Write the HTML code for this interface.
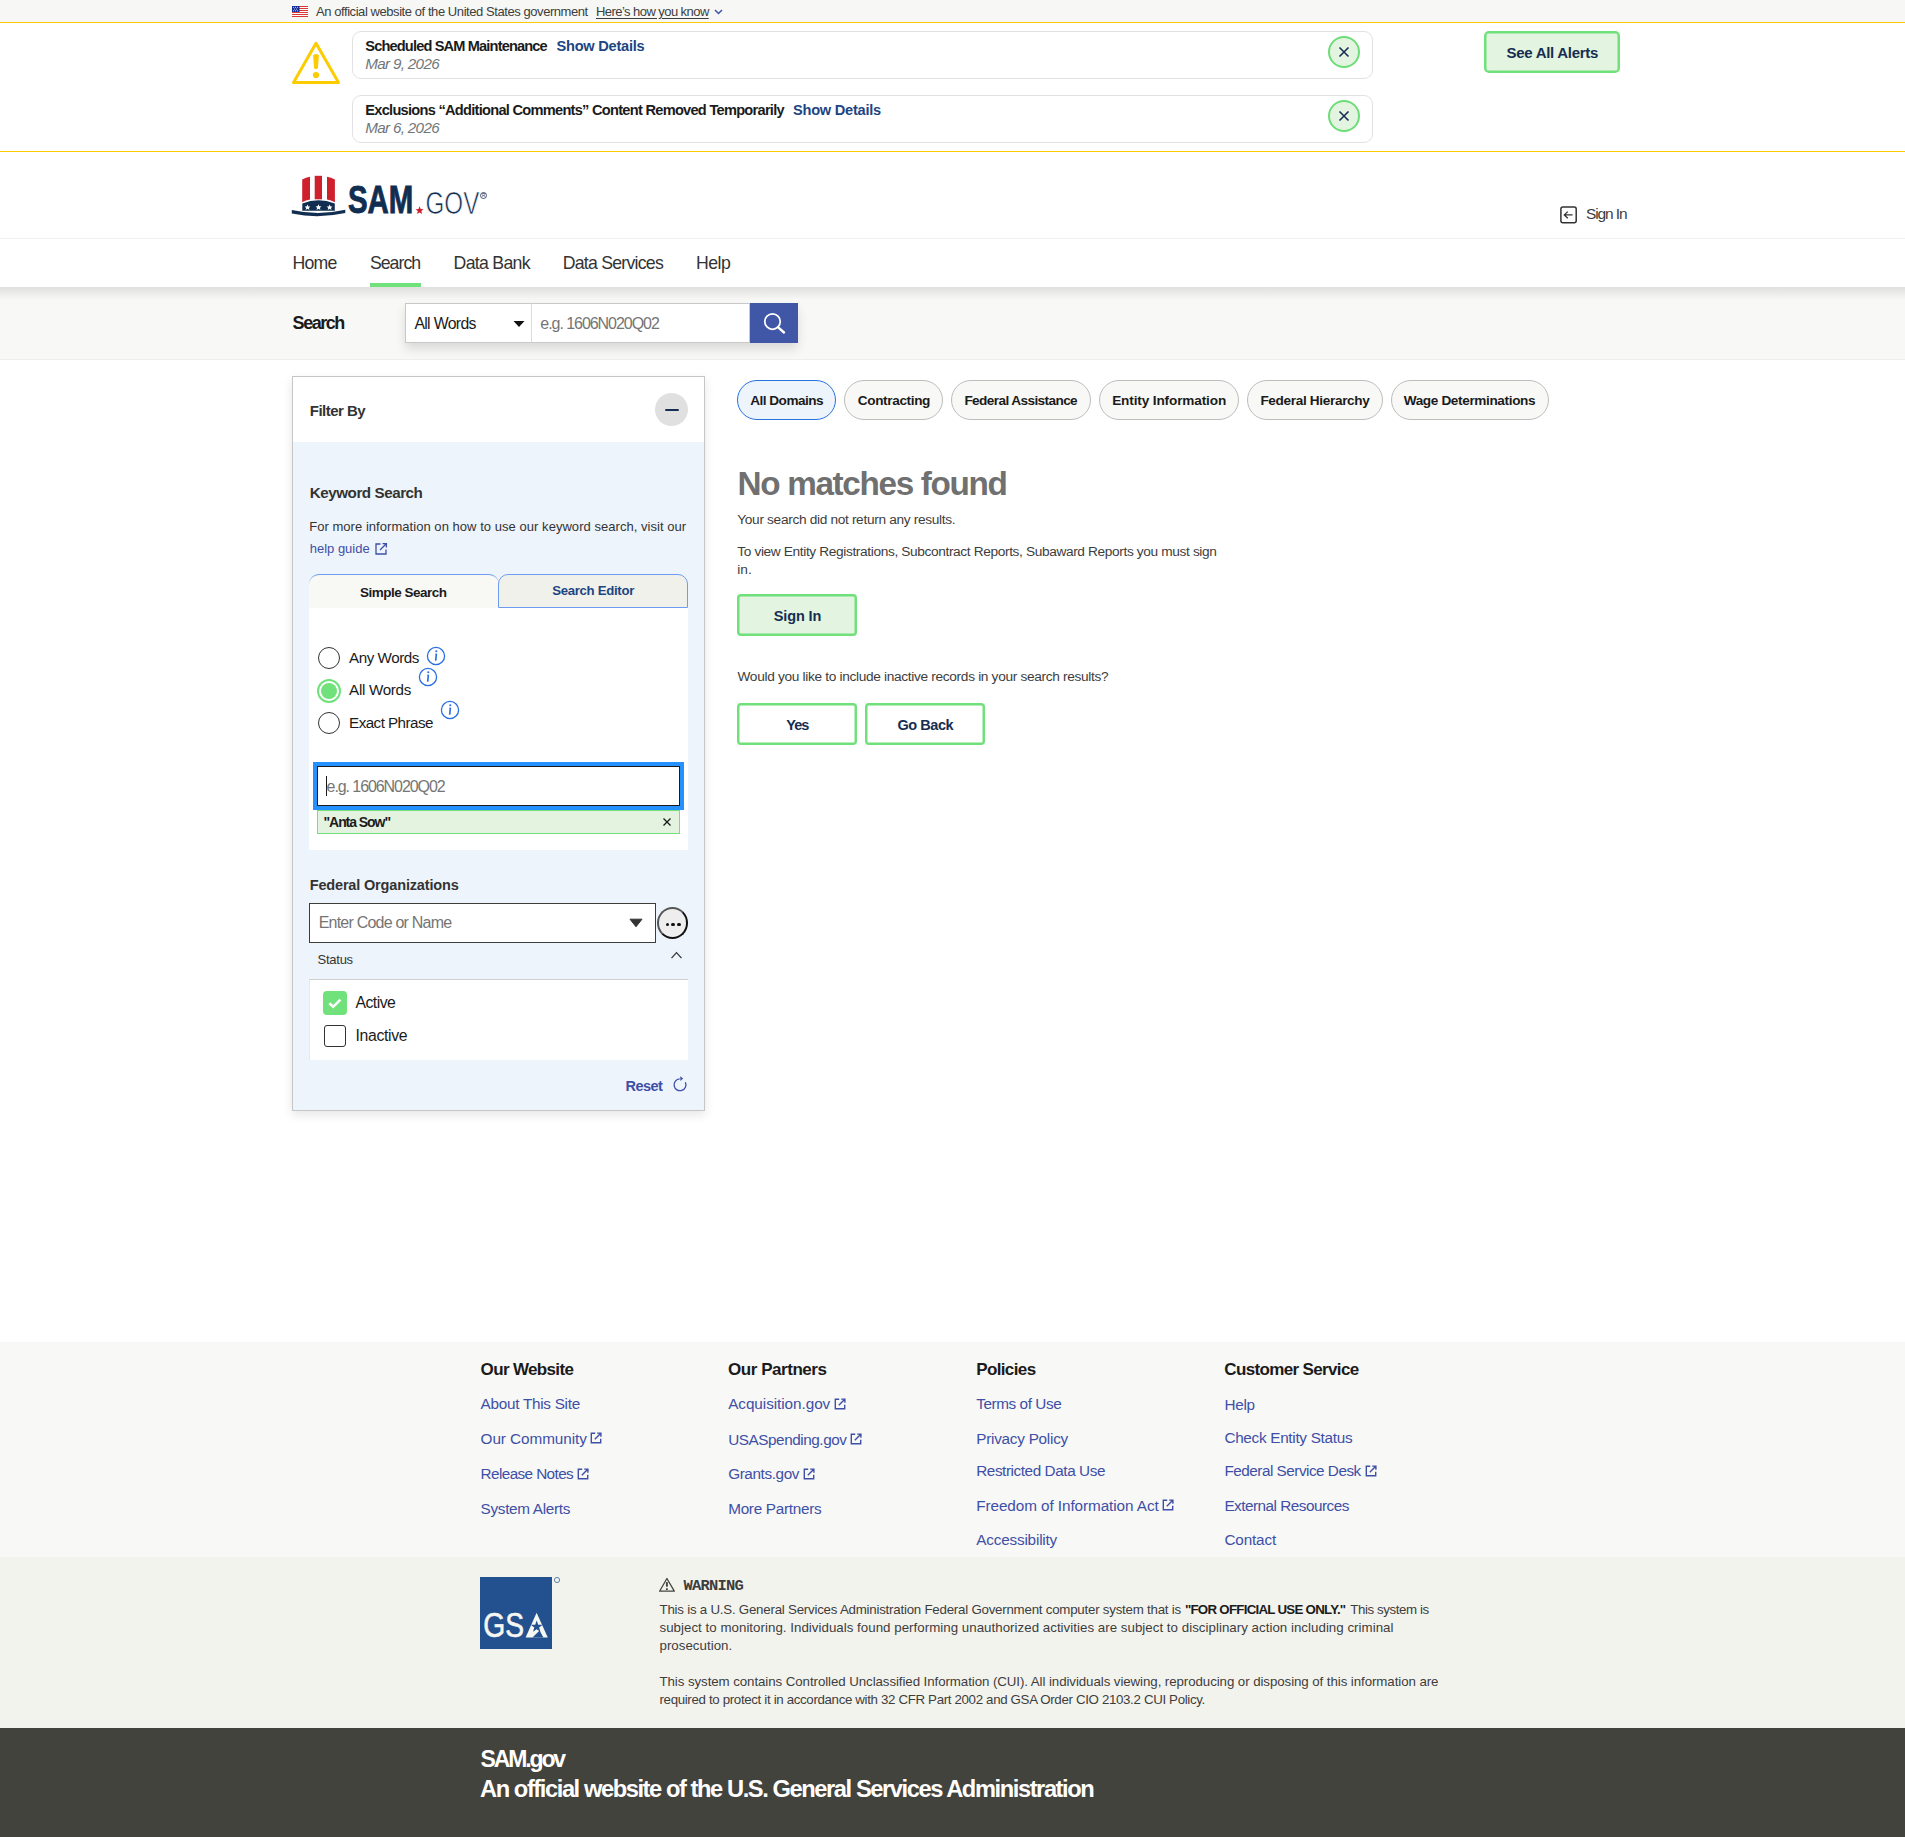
<!DOCTYPE html>
<html><head><meta charset="utf-8"><title>SAM.gov | Search</title>
<style>
html,body{margin:0;padding:0;}
body{width:1905px;height:1837px;position:relative;overflow:hidden;background:#fff;font-family:"Liberation Sans", sans-serif;color:#1b1b1b;}
.a{position:absolute;white-space:nowrap;line-height:1;}
.box{position:absolute;box-sizing:border-box;}
.pill{position:absolute;box-sizing:border-box;height:40px;top:380px;border-radius:20px;border:1px solid #bdbdbd;background:#f8f8f6;}
.gbtn{position:absolute;box-sizing:border-box;border:2px solid #6fe07a;border-radius:4px;box-shadow:inset 0 0 0 0.5px #6fe07a;}
.ext{position:absolute;}

</style></head>
<body>
<div class="box" style="left:0;top:0;width:1905px;height:22px;background:#f7f7f5;"></div>
<div class="box" style="left:0;top:22px;width:1905px;height:1px;background:#facc00;"></div>
<svg class="ext" style="left:292px;top:6px" width="16" height="11" viewBox="0 0 16 11">
<rect width="16" height="11" fill="#fff"/>
<g fill="#d83933"><rect y="0" width="16" height="1"/><rect y="2" width="16" height="1"/><rect y="4" width="16" height="1"/><rect y="6" width="16" height="1"/><rect y="8" width="16" height="1"/><rect y="10" width="16" height="1"/></g>
<rect width="7.5" height="6" fill="#162e9a"/>
<g fill="#fff"><circle cx="1.5" cy="1.2" r=".5"/><circle cx="3.5" cy="1.2" r=".5"/><circle cx="5.5" cy="1.2" r=".5"/><circle cx="2.5" cy="3" r=".5"/><circle cx="4.5" cy="3" r=".5"/><circle cx="1.5" cy="4.8" r=".5"/><circle cx="3.5" cy="4.8" r=".5"/><circle cx="5.5" cy="4.8" r=".5"/></g>
</svg>
<div class="a" style="left:316.0px;top:4.95px;font-size:13px;color:#3d3d3d;"><span style="letter-spacing:-0.433px">An official website of the United States government</span></div>
<div class="a" style="left:596.0px;top:4.95px;font-size:13px;color:#3d3d3d;text-decoration:underline;text-underline-offset:1.5px;"><span style="letter-spacing:-0.558px">Here’s how you know</span></div>
<svg class="ext" style="left:714px;top:9px" width="9" height="6" viewBox="0 0 9 6"><path d="M1 1 L4.5 4.5 L8 1" fill="none" stroke="#3d55a8" stroke-width="1.5"/></svg>
<div class="box" style="left:0;top:151px;width:1905px;height:1px;background:#facc00;"></div>
<svg class="ext" style="left:290px;top:40px" width="52" height="46" viewBox="0 0 52 46">
<path d="M26 3.2 L48.5 42.4 L3.5 42.4 Z" fill="none" stroke="#fbcc00" stroke-width="3" stroke-linejoin="round"/>
<path d="M23.1 15.2 Q26 12.8 28.9 15.2 L27.9 28.2 Q26 30 24.1 28.2 Z" fill="#fbcc00"/>
<circle cx="26" cy="35" r="3.1" fill="#fbcc00"/>
</svg>
<div class="box" style="left:352px;top:31px;width:1021px;height:48px;border:1px solid #e2e2e2;border-radius:9px;background:#fff;"></div>
<div class="box" style="left:1328px;top:36px;width:32px;height:32px;border:2.4px solid #6ddd77;border-radius:50%;background:#e3f4e0;"></div>
<svg class="ext" style="left:1337px;top:45px" width="14" height="14" viewBox="0 0 14 14"><path d="M2.5 2.5 L11.5 11.5 M11.5 2.5 L2.5 11.5" stroke="#162e51" stroke-width="1.6"/></svg>
<div class="box" style="left:352px;top:95px;width:1021px;height:48px;border:1px solid #e2e2e2;border-radius:9px;background:#fff;"></div>
<div class="box" style="left:1328px;top:100px;width:32px;height:32px;border:2.4px solid #6ddd77;border-radius:50%;background:#e3f4e0;"></div>
<svg class="ext" style="left:1337px;top:109px" width="14" height="14" viewBox="0 0 14 14"><path d="M2.5 2.5 L11.5 11.5 M11.5 2.5 L2.5 11.5" stroke="#162e51" stroke-width="1.6"/></svg>
<div class="a" style="left:365.3px;top:39.09px;font-size:14.6px;color:#1b1b1b;font-weight:700;"><span style="letter-spacing:-0.846px">Scheduled SAM Maintenance</span></div>
<div class="a" style="left:556.5px;top:39.09px;font-size:14.6px;color:#1d4582;font-weight:700;"><span style="letter-spacing:-0.246px">Show Details</span></div>
<div class="a" style="left:365.3px;top:55.78px;font-size:15.2px;color:#71767a;font-style:italic;"><span style="letter-spacing:-0.673px">Mar 9, 2026</span></div>
<div class="a" style="left:365.3px;top:103.39px;font-size:14.6px;color:#1b1b1b;font-weight:700;"><span style="letter-spacing:-0.722px">Exclusions “Additional Comments” Content Removed Temporarily</span></div>
<div class="a" style="left:793.0px;top:103.39px;font-size:14.6px;color:#1d4582;font-weight:700;"><span style="letter-spacing:-0.246px">Show Details</span></div>
<div class="a" style="left:365.3px;top:119.78px;font-size:15.2px;color:#71767a;font-style:italic;"><span style="letter-spacing:-0.673px">Mar 6, 2026</span></div>
<div class="gbtn" style="left:1484px;top:31px;width:136px;height:42px;background:#e3f4e0;border-radius:5px;"></div>
<div class="a" style="left:1506.6px;top:44.95px;font-size:15px;color:#162e51;font-weight:700;"><span style="letter-spacing:-0.304px">See All Alerts</span></div>
<svg class="ext" style="left:290px;top:172px" width="200" height="48" viewBox="290 172 200 48">
<g fill="#cf202e">
<path d="M302.2 179.6 Q306 177.3 310 176.8 L310 199.5 Q306 200.3 302.2 202.3 Z"/>
<path d="M314.7 175.8 L322 175.8 L322 199.3 L314.7 199.3 Z"/>
<path d="M327 176.8 Q331 177.3 334.9 179.6 L334.9 202.3 Q331 200.3 327 199.5 Z"/>
</g>
<path d="M302.3 203.5 Q318.5 197 334.8 203.5 L334.8 210.8 L302.3 210.8 Z" fill="#112e51"/>
<g fill="#fff">
<path d="M307.5 204.6 l.9 1.8 2 .2 -1.5 1.3 .5 2 -1.9-1.1 -1.8 1.1 .4-2 -1.5-1.3 2-.2z"/>
<path d="M318.5 204.3 l.9 1.9 2.1 .2 -1.6 1.4 .5 2.1 -1.9-1.1 -1.9 1.1 .5-2.1 -1.6-1.4 2.1-.2z"/>
<path d="M329.6 204.6 l.9 1.8 2 .2 -1.5 1.3 .5 2 -1.9-1.1 -1.8 1.1 .4-2 -1.5-1.3 2-.2z"/>
</g>
<path d="M291.8 210 Q318.5 216 345.3 209.8 L345.3 213 Q318.5 219 291.8 213.6 Z" fill="#112e51"/>
<text x="347.9" y="212.8" font-family="Liberation Sans" font-weight="700" font-size="39.3" fill="#112e51" stroke="#112e51" stroke-width="0.9" textLength="65.3" lengthAdjust="spacingAndGlyphs">SAM</text>
<path d="M419.6 206.3 l1.1 2.7 2.9 .2 -2.2 1.9 .7 2.8 -2.5-1.5 -2.5 1.5 .7-2.8 -2.2-1.9 2.9-.2z" fill="#cf202e"/>
<text x="425.5" y="213.6" font-family="Liberation Sans" font-weight="400" font-size="31" fill="#112e51" stroke="#fff" stroke-width="0.7" textLength="53.8" lengthAdjust="spacingAndGlyphs">GOV</text>
<circle cx="483.5" cy="195.5" r="3" fill="none" stroke="#112e51" stroke-width=".8"/>
<text x="481.9" y="197.4" font-family="Liberation Sans" font-size="4.5" fill="#112e51">R</text>
</svg>
<svg class="ext" style="left:1559px;top:205px" width="20" height="20" viewBox="0 0 20 20">
<rect x="1.9" y="1.9" width="15.3" height="15.9" rx="2" fill="none" stroke="#333" stroke-width="1.5"/>
<path d="M13.6 9.9 L5.5 9.9 M8.8 6.6 L5.3 9.9 L8.8 13.2" fill="none" stroke="#333" stroke-width="1.3"/>
</svg>
<div class="a" style="left:1586.0px;top:205.62px;font-size:15.5px;color:#3d3d3d;"><span style="letter-spacing:-1.118px">Sign In</span></div>
<div class="box" style="left:0;top:238px;width:1905px;height:1px;background:#f0f0ec;"></div>
<div class="a" style="left:292.4px;top:254.66px;font-size:17.7px;color:#333333;"><span style="letter-spacing:-0.739px">Home</span></div>
<div class="a" style="left:369.9px;top:254.66px;font-size:17.7px;color:#333333;"><span style="letter-spacing:-0.954px">Search</span></div>
<div class="a" style="left:453.6px;top:254.66px;font-size:17.7px;color:#333333;"><span style="letter-spacing:-0.705px">Data Bank</span></div>
<div class="a" style="left:562.7px;top:254.66px;font-size:17.7px;color:#333333;"><span style="letter-spacing:-0.753px">Data Services</span></div>
<div class="a" style="left:696.0px;top:254.66px;font-size:17.7px;color:#333333;"><span style="letter-spacing:-0.540px">Help</span></div>
<div class="box" style="left:370px;top:283px;width:51px;height:4px;background:#70e17b;"></div>
<div class="box" style="left:0;top:287px;width:1905px;height:73px;background:#f8f8f6;border-bottom:1px solid #efefe9;"></div>
<div class="box" style="left:0;top:287px;width:1905px;height:13px;background:linear-gradient(#e0e0de,rgba(248,248,246,0));"></div>
<div class="box" style="left:405px;top:303px;width:393px;height:40px;box-shadow:0 6px 10px rgba(0,0,0,.12);"></div>
<div class="box" style="left:405px;top:303px;width:127px;height:40px;background:#fff;border:1px solid #c8c8c8;"></div>
<div class="box" style="left:531px;top:303px;width:219px;height:40px;background:#fff;border:1px solid #c8c8c8;border-left:1px solid #dcdcdc;"></div>
<svg class="ext" style="left:513px;top:320px" width="12" height="8" viewBox="0 0 12 8"><path d="M0.5 1 L11.5 1 L6 7 Z" fill="#111"/></svg>
<div class="box" style="left:750px;top:303px;width:48px;height:40px;background:#3f57a6;"></div>
<svg class="ext" style="left:762px;top:311px" width="24" height="24" viewBox="0 0 24 24"><circle cx="10.5" cy="10.5" r="7.75" fill="none" stroke="#fff" stroke-width="1.75"/><path d="M16.2 16.3 L22 21.5" stroke="#fff" stroke-width="2.4" stroke-linecap="round"/></svg>
<div class="a" style="left:292.6px;top:314.40px;font-size:18px;color:#1b1b1b;font-weight:700;"><span style="letter-spacing:-1.463px">Search</span></div>
<div class="a" style="left:414.4px;top:315.97px;font-size:15.8px;color:#1b1b1b;"><span style="letter-spacing:-0.660px">All Words</span></div>
<div class="a" style="left:540.3px;top:315.90px;font-size:16px;color:#757575;"><span style="letter-spacing:-1.046px">e.g. 1606N020Q02</span></div>
<div class="box" style="left:292px;top:376px;width:413px;height:735px;border:1px solid #c6c6c6;background:#eef4fb;box-shadow:0 4px 10px rgba(0,0,0,.1);"></div>
<div class="box" style="left:293px;top:377px;width:411px;height:65px;background:#fff;"></div>
<div class="a" style="left:309.8px;top:403.05px;font-size:15px;color:#333333;font-weight:700;"><span style="letter-spacing:-0.531px">Filter By</span></div>
<div class="box" style="left:655px;top:393px;width:33px;height:33px;border-radius:50%;background:#e0e0e0;"></div>
<div class="box" style="left:665px;top:408.5px;width:14px;height:2px;background:#162e51;border-radius:1px;"></div>
<div class="a" style="left:309.7px;top:484.68px;font-size:15.2px;color:#333333;font-weight:700;"><span style="letter-spacing:-0.447px">Keyword Search</span></div>
<div class="a" style="left:309.2px;top:520.25px;font-size:13px;color:#333333;"><span style="letter-spacing:0.043px">For more information on how to use our keyword search, visit our</span></div>
<div class="a" style="left:309.7px;top:541.55px;font-size:13px;color:#3e4fa6;"><span style="letter-spacing:0.000px">help guide</span></div>
<svg class="ext" style="left:374px;top:542px" width="14" height="14" viewBox="0 0 14 14"><path d="M6.5 2 L2 2 L2 12 L12 12 L12 7.5" fill="none" stroke="#3e4fa6" stroke-width="1.3"/><path d="M6 8 L12 2 M8.5 1.6 L12.4 1.6 L12.4 5.5" fill="none" stroke="#3e4fa6" stroke-width="1.3"/></svg>
<div class="box" style="left:309px;top:607px;width:379px;height:243px;background:#fff;"></div>
<div class="box" style="left:309px;top:574px;width:190px;height:34px;background:#f8f8f5;border-top:1px solid #6f9cf0;border-radius:10px 10px 0 0;"></div>
<div class="box" style="left:498px;top:574px;width:190px;height:34px;background:#f1f1ec;border:1px solid #6f9cf0;border-radius:10px 10px 0 0;"></div>
<div class="a" style="left:360.1px;top:586.22px;font-size:13.5px;color:#1b1b1b;font-weight:700;"><span style="letter-spacing:-0.516px">Simple Search</span></div>
<div class="a" style="left:552.2px;top:584.38px;font-size:13.2px;color:#1d4582;font-weight:700;"><span style="letter-spacing:-0.300px">Search Editor</span></div>
<div class="box" style="left:318px;top:647px;width:22px;height:22px;border-radius:50%;border:1.5px solid #333;background:#fff;"></div>
<div class="box" style="left:317px;top:679px;width:24px;height:24px;border-radius:50%;border:2px solid #70e17b;background:#fff;"></div>
<div class="box" style="left:321px;top:683px;width:16px;height:16px;border-radius:50%;background:#70e17b;"></div>
<div class="box" style="left:318px;top:712px;width:22px;height:22px;border-radius:50%;border:1.5px solid #333;background:#fff;"></div>
<div class="a" style="left:349.1px;top:649.68px;font-size:15.2px;color:#1b1b1b;"><span style="letter-spacing:-0.471px">Any Words</span></div>
<div class="a" style="left:349.1px;top:681.98px;font-size:15.2px;color:#1b1b1b;"><span style="letter-spacing:-0.318px">All Words</span></div>
<div class="a" style="left:349.1px;top:715.18px;font-size:15.2px;color:#1b1b1b;"><span style="letter-spacing:-0.550px">Exact Phrase</span></div>
<svg class="ext" style="left:426px;top:646.2px" width="20" height="20" viewBox="0 0 20 20"><circle cx="10" cy="10" r="8.6" fill="none" stroke="#2a6fe0" stroke-width="1.3"/><circle cx="10.3" cy="5.3" r="1.05" fill="#2a6fe0"/><path d="M10.35 7.9 L9.75 14.2" stroke="#2a6fe0" stroke-width="1.6"/><path d="M9.4 8.1 L10.5 7.9 M8.9 14.3 L10.4 14.1" stroke="#2a6fe0" stroke-width="1"/></svg>
<svg class="ext" style="left:418.3px;top:667.2px" width="20" height="20" viewBox="0 0 20 20"><circle cx="10" cy="10" r="8.6" fill="none" stroke="#2a6fe0" stroke-width="1.3"/><circle cx="10.3" cy="5.3" r="1.05" fill="#2a6fe0"/><path d="M10.35 7.9 L9.75 14.2" stroke="#2a6fe0" stroke-width="1.6"/><path d="M9.4 8.1 L10.5 7.9 M8.9 14.3 L10.4 14.1" stroke="#2a6fe0" stroke-width="1"/></svg>
<svg class="ext" style="left:440.2px;top:700.4px" width="20" height="20" viewBox="0 0 20 20"><circle cx="10" cy="10" r="8.6" fill="none" stroke="#2a6fe0" stroke-width="1.3"/><circle cx="10.3" cy="5.3" r="1.05" fill="#2a6fe0"/><path d="M10.35 7.9 L9.75 14.2" stroke="#2a6fe0" stroke-width="1.6"/><path d="M9.4 8.1 L10.5 7.9 M8.9 14.3 L10.4 14.1" stroke="#2a6fe0" stroke-width="1"/></svg>
<div class="box" style="left:313px;top:762px;width:371px;height:48px;background:#2491ff;"></div>
<div class="box" style="left:317px;top:766px;width:363px;height:40px;background:#fff;border:1px solid #1b1b1b;"></div>
<div class="box" style="left:326px;top:776px;width:1.2px;height:20px;background:#1b1b1b;"></div>
<div class="a" style="left:326.6px;top:779.20px;font-size:16px;color:#757575;"><span style="letter-spacing:-1.079px">e.g. 1606N020Q02</span></div>
<div class="box" style="left:317px;top:810px;width:363px;height:24px;background:#e3f3e0;border:1px solid #70e17b;"></div>
<div class="a" style="left:323.5px;top:815.00px;font-size:14px;color:#1b1b1b;font-weight:700;"><span style="letter-spacing:-1.059px">"Anta Sow"</span></div>
<svg class="ext" style="left:662px;top:817px" width="10" height="10" viewBox="0 0 10 10"><path d="M1.5 1.5 L8.5 8.5 M8.5 1.5 L1.5 8.5" stroke="#1b1b1b" stroke-width="1.3"/></svg>
<div class="a" style="left:309.7px;top:878.37px;font-size:14.5px;color:#333333;font-weight:700;"><span style="letter-spacing:-0.161px">Federal Organizations</span></div>
<div class="box" style="left:309px;top:903px;width:347px;height:40px;background:#fff;border:1px solid #3d3d3a;"></div>
<div class="a" style="left:318.7px;top:915.20px;font-size:16px;color:#757575;"><span style="letter-spacing:-0.785px">Enter Code or Name</span></div>
<svg class="ext" style="left:629px;top:918px" width="14" height="10" viewBox="0 0 14 10"><path d="M1 1.2 L13 1.2 L7 8.8 Z" fill="#333" stroke="#333" stroke-width="1" stroke-linejoin="round"/></svg>
<div class="box" style="left:657px;top:907px;width:31px;height:32px;border-radius:50%;background:#eee;border:2px solid #111;border-top-color:#555;border-left-color:#555;"></div>
<div class="box" style="left:665.5px;top:922.5px;width:3.8px;height:3.8px;border-radius:50%;background:#111;"></div>
<div class="box" style="left:671.4px;top:922.5px;width:3.8px;height:3.8px;border-radius:50%;background:#111;"></div>
<div class="box" style="left:677.3000000000001px;top:922.5px;width:3.8px;height:3.8px;border-radius:50%;background:#111;"></div>
<div class="a" style="left:317.6px;top:952.95px;font-size:13px;color:#333333;"><span style="letter-spacing:-0.265px">Status</span></div>
<svg class="ext" style="left:670px;top:950px" width="13" height="10" viewBox="0 0 13 10"><path d="M1.5 8.2 L6.5 2.6 L11.5 8.2" fill="none" stroke="#333" stroke-width="1.2"/></svg>
<div class="box" style="left:309px;top:979px;width:379px;height:81px;background:#fff;border-top:1.5px solid #cfcfcf;border-left:1px solid #e8e8e8;"></div>
<div class="box" style="left:323px;top:991px;width:24px;height:24px;border-radius:4px;background:#70e17b;"></div>
<svg class="ext" style="left:323px;top:991px" width="24" height="24" viewBox="0 0 24 24"><path d="M6.3 12.2 L10.2 15.8 L17.4 8.6" fill="none" stroke="#fff" stroke-width="2.6"/></svg>
<div class="box" style="left:324px;top:1025px;width:22px;height:22px;border-radius:3px;border:1.5px solid #333;background:#fff;"></div>
<div class="a" style="left:355.5px;top:995.37px;font-size:15.8px;color:#1b1b1b;"><span style="letter-spacing:-0.551px">Active</span></div>
<div class="a" style="left:355.5px;top:1027.57px;font-size:15.8px;color:#1b1b1b;"><span style="letter-spacing:-0.327px">Inactive</span></div>
<div class="a" style="left:625.6px;top:1079.17px;font-size:14.5px;color:#3e4fa6;font-weight:700;"><span style="letter-spacing:-0.556px">Reset</span></div>
<svg class="ext" style="left:671px;top:1074px" width="18" height="19" viewBox="0 0 18 19"><path d="M14.35 8.3 A5.9 5.9 0 1 1 8.7 4.9" fill="none" stroke="#3e4fa6" stroke-width="1.3"/><path d="M9.2 2.3 L12.1 4.6 L9.4 6.9 Z" fill="#3e4fa6"/></svg>
<div class="pill" style="left:737px;width:99px;border-color:#2672de;background:#eef4fb;"></div>
<div class="a" style="left:750.3px;top:394.24px;font-size:13.6px;color:#1b1b1b;font-weight:700;"><span style="letter-spacing:-0.530px">All Domains</span></div>
<div class="pill" style="left:844px;width:99px;"></div>
<div class="a" style="left:857.8px;top:394.24px;font-size:13.6px;color:#1b1b1b;font-weight:700;"><span style="letter-spacing:-0.370px">Contracting</span></div>
<div class="pill" style="left:951px;width:140px;"></div>
<div class="a" style="left:964.4px;top:394.24px;font-size:13.6px;color:#1b1b1b;font-weight:700;"><span style="letter-spacing:-0.596px">Federal Assistance</span></div>
<div class="pill" style="left:1099px;width:140px;"></div>
<div class="a" style="left:1112.2px;top:394.24px;font-size:13.6px;color:#1b1b1b;font-weight:700;"><span style="letter-spacing:-0.132px">Entity Information</span></div>
<div class="pill" style="left:1247px;width:136px;"></div>
<div class="a" style="left:1260.4px;top:394.24px;font-size:13.6px;color:#1b1b1b;font-weight:700;"><span style="letter-spacing:-0.337px">Federal Hierarchy</span></div>
<div class="pill" style="left:1391px;width:158px;"></div>
<div class="a" style="left:1403.7px;top:394.24px;font-size:13.6px;color:#1b1b1b;font-weight:700;"><span style="letter-spacing:-0.367px">Wage Determinations</span></div>
<div class="a" style="left:737.6px;top:466.89px;font-size:33.3px;color:#707070;font-weight:700;"><span style="letter-spacing:-1.351px">No matches found</span></div>
<div class="a" style="left:737.3px;top:513.15px;font-size:13.7px;color:#3d3d3d;"><span style="letter-spacing:-0.332px">Your search did not return any results.</span></div>
<div class="a" style="left:737.3px;top:544.95px;font-size:13.7px;color:#3d3d3d;"><span style="letter-spacing:-0.367px">To view Entity Registrations, Subcontract Reports, Subaward Reports you must sign</span></div>
<div class="a" style="left:737.3px;top:562.55px;font-size:13.7px;color:#3d3d3d;">in.</div>
<div class="gbtn" style="left:737px;top:594px;width:120px;height:42px;background:#e3f4e0;"></div>
<div class="a" style="left:773.8px;top:609.47px;font-size:14.5px;color:#162e51;font-weight:700;"><span style="letter-spacing:-0.145px">Sign In</span></div>
<div class="a" style="left:737.5px;top:670.15px;font-size:13.7px;color:#3d3d3d;"><span style="letter-spacing:-0.325px">Would you like to include inactive records in your search results?</span></div>
<div class="gbtn" style="left:737px;top:703px;width:120px;height:42px;background:#fff;"></div>
<div class="gbtn" style="left:865px;top:703px;width:120px;height:42px;background:#fff;"></div>
<div class="a" style="left:786.2px;top:718.17px;font-size:14.5px;color:#162e51;font-weight:700;"><span style="letter-spacing:-0.920px">Yes</span></div>
<div class="a" style="left:897.4px;top:718.17px;font-size:14.5px;color:#162e51;font-weight:700;"><span style="letter-spacing:-0.438px">Go Back</span></div>
<div class="box" style="left:0;top:1342px;width:1905px;height:215px;background:#f8f8f6;"></div>
<div class="box" style="left:0;top:1557px;width:1905px;height:171px;background:#f3f3ee;"></div>
<div class="box" style="left:0;top:1728px;width:1905px;height:109px;background:#43433e;"></div>
<div class="a" style="left:480.6px;top:1361.25px;font-size:17px;color:#1b1b1b;font-weight:700;"><span style="letter-spacing:-0.650px">Our Website</span></div>
<div class="a" style="left:728.0px;top:1361.25px;font-size:17px;color:#1b1b1b;font-weight:700;"><span style="letter-spacing:-0.455px">Our Partners</span></div>
<div class="a" style="left:976.2px;top:1361.25px;font-size:17px;color:#1b1b1b;font-weight:700;"><span style="letter-spacing:-0.622px">Policies</span></div>
<div class="a" style="left:1224.3px;top:1361.25px;font-size:17px;color:#1b1b1b;font-weight:700;"><span style="letter-spacing:-0.644px">Customer Service</span></div>
<div class="a" style="left:480.6px;top:1396.49px;font-size:15.3px;color:#3e4fa6;"><span style="letter-spacing:-0.274px">About This Site</span></div>
<div class="a" style="left:480.6px;top:1430.69px;font-size:15.3px;color:#3e4fa6;"><span style="letter-spacing:-0.065px">Our Community</span></div>
<svg class="ext" style="left:590px;top:1432.4px" width="12" height="12" viewBox="0 0 12 12"><path d="M5.2 1.3 L1.3 1.3 L1.3 10.7 L10.7 10.7 L10.7 6.8" fill="none" stroke="#3e4fa6" stroke-width="1.4"/><path d="M4.8 7.2 L10.5 1.5 M7.2 1.1 L10.9 1.1 L10.9 4.8" fill="none" stroke="#3e4fa6" stroke-width="1.4"/></svg>
<div class="a" style="left:480.6px;top:1466.09px;font-size:15.3px;color:#3e4fa6;"><span style="letter-spacing:-0.604px">Release Notes</span></div>
<svg class="ext" style="left:576.5px;top:1467.8px" width="12" height="12" viewBox="0 0 12 12"><path d="M5.2 1.3 L1.3 1.3 L1.3 10.7 L10.7 10.7 L10.7 6.8" fill="none" stroke="#3e4fa6" stroke-width="1.4"/><path d="M4.8 7.2 L10.5 1.5 M7.2 1.1 L10.9 1.1 L10.9 4.8" fill="none" stroke="#3e4fa6" stroke-width="1.4"/></svg>
<div class="a" style="left:480.6px;top:1500.99px;font-size:15.3px;color:#3e4fa6;"><span style="letter-spacing:-0.313px">System Alerts</span></div>
<div class="a" style="left:728.2px;top:1396.39px;font-size:15.3px;color:#3e4fa6;"><span style="letter-spacing:-0.061px">Acquisition.gov</span></div>
<svg class="ext" style="left:833.8px;top:1398.1px" width="12" height="12" viewBox="0 0 12 12"><path d="M5.2 1.3 L1.3 1.3 L1.3 10.7 L10.7 10.7 L10.7 6.8" fill="none" stroke="#3e4fa6" stroke-width="1.4"/><path d="M4.8 7.2 L10.5 1.5 M7.2 1.1 L10.9 1.1 L10.9 4.8" fill="none" stroke="#3e4fa6" stroke-width="1.4"/></svg>
<div class="a" style="left:728.2px;top:1431.69px;font-size:15.3px;color:#3e4fa6;"><span style="letter-spacing:-0.449px">USASpending.gov</span></div>
<svg class="ext" style="left:850.3px;top:1433.4px" width="12" height="12" viewBox="0 0 12 12"><path d="M5.2 1.3 L1.3 1.3 L1.3 10.7 L10.7 10.7 L10.7 6.8" fill="none" stroke="#3e4fa6" stroke-width="1.4"/><path d="M4.8 7.2 L10.5 1.5 M7.2 1.1 L10.9 1.1 L10.9 4.8" fill="none" stroke="#3e4fa6" stroke-width="1.4"/></svg>
<div class="a" style="left:728.2px;top:1466.49px;font-size:15.3px;color:#3e4fa6;"><span style="letter-spacing:-0.403px">Grants.gov</span></div>
<svg class="ext" style="left:802.5px;top:1468.2px" width="12" height="12" viewBox="0 0 12 12"><path d="M5.2 1.3 L1.3 1.3 L1.3 10.7 L10.7 10.7 L10.7 6.8" fill="none" stroke="#3e4fa6" stroke-width="1.4"/><path d="M4.8 7.2 L10.5 1.5 M7.2 1.1 L10.9 1.1 L10.9 4.8" fill="none" stroke="#3e4fa6" stroke-width="1.4"/></svg>
<div class="a" style="left:728.2px;top:1501.39px;font-size:15.3px;color:#3e4fa6;"><span style="letter-spacing:-0.290px">More Partners</span></div>
<div class="a" style="left:976.2px;top:1396.49px;font-size:15.3px;color:#3e4fa6;"><span style="letter-spacing:-0.418px">Terms of Use</span></div>
<div class="a" style="left:976.2px;top:1430.69px;font-size:15.3px;color:#3e4fa6;"><span style="letter-spacing:-0.245px">Privacy Policy</span></div>
<div class="a" style="left:976.2px;top:1463.49px;font-size:15.3px;color:#3e4fa6;"><span style="letter-spacing:-0.426px">Restricted Data Use</span></div>
<div class="a" style="left:976.2px;top:1497.59px;font-size:15.3px;color:#3e4fa6;"><span style="letter-spacing:-0.078px">Freedom of Information Act</span></div>
<svg class="ext" style="left:1162px;top:1499.3px" width="12" height="12" viewBox="0 0 12 12"><path d="M5.2 1.3 L1.3 1.3 L1.3 10.7 L10.7 10.7 L10.7 6.8" fill="none" stroke="#3e4fa6" stroke-width="1.4"/><path d="M4.8 7.2 L10.5 1.5 M7.2 1.1 L10.9 1.1 L10.9 4.8" fill="none" stroke="#3e4fa6" stroke-width="1.4"/></svg>
<div class="a" style="left:976.2px;top:1532.49px;font-size:15.3px;color:#3e4fa6;"><span style="letter-spacing:-0.185px">Accessibility</span></div>
<div class="a" style="left:1224.4px;top:1396.69px;font-size:15.3px;color:#3e4fa6;"><span style="letter-spacing:-0.248px">Help</span></div>
<div class="a" style="left:1224.4px;top:1430.49px;font-size:15.3px;color:#3e4fa6;"><span style="letter-spacing:-0.296px">Check Entity Status</span></div>
<div class="a" style="left:1224.4px;top:1463.39px;font-size:15.3px;color:#3e4fa6;"><span style="letter-spacing:-0.494px">Federal Service Desk</span></div>
<svg class="ext" style="left:1364.8px;top:1465.1px" width="12" height="12" viewBox="0 0 12 12"><path d="M5.2 1.3 L1.3 1.3 L1.3 10.7 L10.7 10.7 L10.7 6.8" fill="none" stroke="#3e4fa6" stroke-width="1.4"/><path d="M4.8 7.2 L10.5 1.5 M7.2 1.1 L10.9 1.1 L10.9 4.8" fill="none" stroke="#3e4fa6" stroke-width="1.4"/></svg>
<div class="a" style="left:1224.4px;top:1498.19px;font-size:15.3px;color:#3e4fa6;"><span style="letter-spacing:-0.502px">External Resources</span></div>
<div class="a" style="left:1224.4px;top:1531.99px;font-size:15.3px;color:#3e4fa6;"><span style="letter-spacing:-0.157px">Contact</span></div>
<svg class="ext" style="left:480px;top:1577px" width="84" height="72" viewBox="480 1577 84 72">
<rect x="480" y="1577" width="72" height="72" fill="#23518f"/>
<text x="483.3" y="1637.4" font-family="Liberation Sans" font-weight="400" font-size="35" fill="#f6f6f2" textLength="40.8" lengthAdjust="spacingAndGlyphs" stroke="#f6f6f2" stroke-width=".6">GS</text>
<path d="M536.6 1612.8 L547.8 1637.4 L525.6 1637.4 Z" fill="#f6f6f2"/>
<path d="M536.7 1620.6 L538.2 1624.7 L542.6 1624.8 L539.1 1627.5 L540.4 1631.8 L536.7 1629.2 L533 1631.8 L534.3 1627.5 L530.8 1624.8 L535.2 1624.7 Z" fill="#23518f"/>
<path d="M539.6 1630.5 L543.4 1637.6 L532.5 1637.6 Z" fill="#23518f"/>
<circle cx="557" cy="1580" r="2.6" fill="none" stroke="#23518f" stroke-width=".7"/>
</svg>
<svg class="ext" style="left:658px;top:1577px" width="19" height="17" viewBox="0 0 19 17"><path d="M8.9 1.5 L16.3 14.2 L1.6 14.2 Z" fill="none" stroke="#454540" stroke-width="1.3" stroke-linejoin="round"/><rect x="7.95" y="5.1" width="1.9" height="4.6" fill="#454540"/><rect x="7.95" y="11.3" width="1.9" height="1.7" fill="#454540"/></svg>
<div class="a" style="left:683.4px;top:1578.62px;font-size:15.5px;color:#3d3d3d;font-weight:700;font-family:'Liberation Mono', monospace;"><span style="letter-spacing:-0.788px">WARNING</span></div>
<div class="a" style="left:659.5px;top:1603.29px;font-size:13.3px;color:#3d3d3d;"><span style="letter-spacing:-0.228px">This is a U.S. General Services Administration Federal Government computer system that is</span></div>
<div class="a" style="left:1184.9px;top:1603.29px;font-size:13.3px;color:#1b1b1b;font-weight:700;"><span style="letter-spacing:-0.732px">"FOR OFFICIAL USE ONLY."</span></div>
<div class="a" style="left:1350.2px;top:1603.29px;font-size:13.3px;color:#3d3d3d;"><span style="letter-spacing:-0.403px">This system is</span></div>
<div class="a" style="left:659.5px;top:1621.39px;font-size:13.3px;color:#3d3d3d;"><span style="letter-spacing:0.029px">subject to monitoring. Individuals found performing unauthorized activities are subject to disciplinary action including criminal</span></div>
<div class="a" style="left:659.5px;top:1639.49px;font-size:13.3px;color:#3d3d3d;"><span style="letter-spacing:0.021px">prosecution.</span></div>
<div class="a" style="left:659.5px;top:1674.99px;font-size:13.3px;color:#3d3d3d;"><span style="letter-spacing:-0.076px">This system contains Controlled Unclassified Information (CUI). All individuals viewing, reproducing or disposing of this information are</span></div>
<div class="a" style="left:659.5px;top:1693.09px;font-size:13.3px;color:#3d3d3d;"><span style="letter-spacing:-0.340px">required to protect it in accordance with 32 CFR Part 2002 and GSA Order CIO 2103.2 CUI Policy.</span></div>
<div class="a" style="left:480.5px;top:1747.85px;font-size:23px;color:#fff;font-weight:700;"><span style="letter-spacing:-2.122px">SAM.gov</span></div>
<div class="a" style="left:480.0px;top:1778.06px;font-size:23.7px;color:#fff;font-weight:700;"><span style="letter-spacing:-1.429px">An official website of the U.S. General Services Administration</span></div>
</body></html>
